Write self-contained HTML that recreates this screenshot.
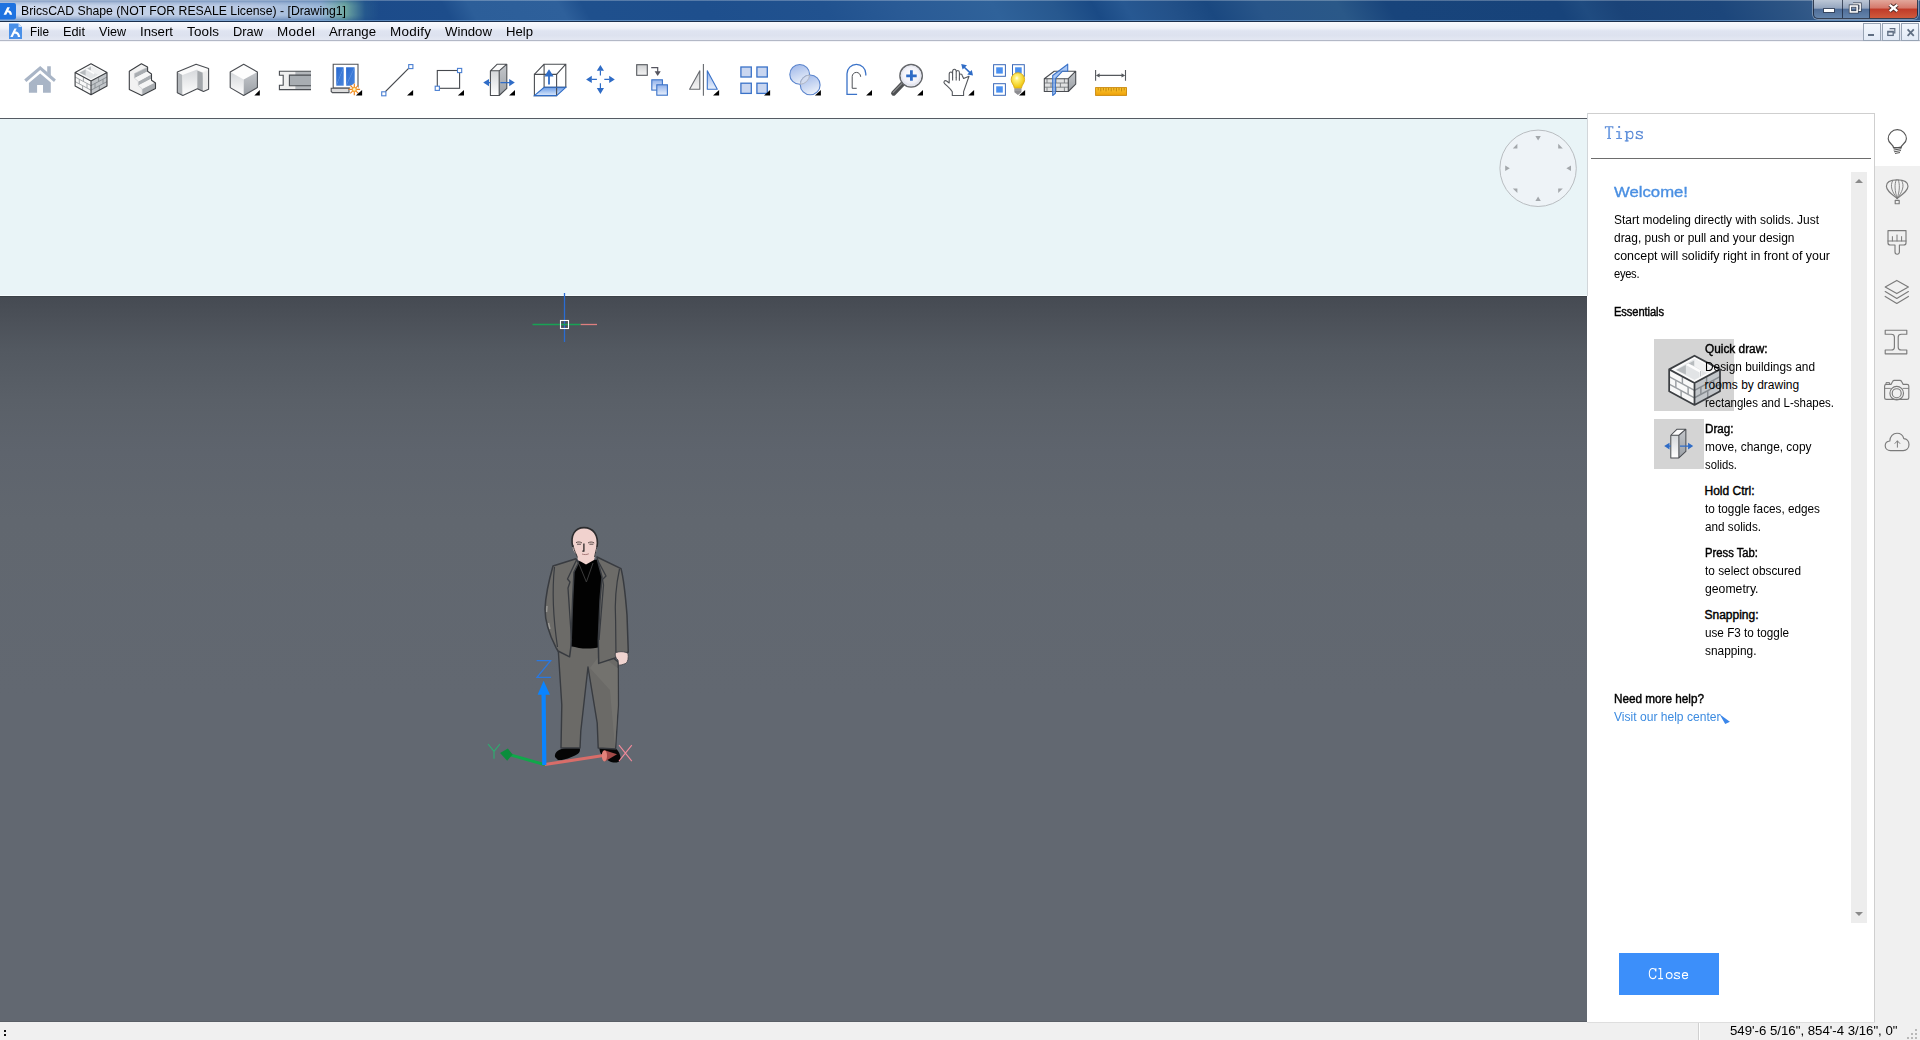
<!DOCTYPE html>
<html><head><meta charset="utf-8"><title>BricsCAD Shape</title>
<style>
html,body{margin:0;padding:0;}
body{width:1920px;height:1040px;position:relative;overflow:hidden;background:#fff;font-family:"Liberation Sans",sans-serif;}
.a{position:absolute;}
.t{position:absolute;white-space:nowrap;line-height:1;font-family:"Liberation Sans",sans-serif;}
svg{position:absolute;overflow:visible;}
</style></head>
<body>
<!-- title bar -->
<div class="a" id="titlebar" style="left:0;top:0;width:1920px;height:21px;overflow:hidden;background:#1c4b8a;"><div style="position:absolute;left:-20px;top:0;width:1980px;height:21px;transform:skewX(30deg);transform-origin:0 0;background:linear-gradient(90deg,#1c4b8a 20px,#1c4b8a 382px,#1d4d8b 460px,#2c5e99 486px,#2e609b 576px,#1f508d 600px,#1e4f8d 720px,#21528f 840px,#2a5b96 920px,#2f629a 1010px,#27588f 1070px,#1a4a85 1110px,#275892 1142px,#235189 1185px,#1a4880 1225px,#285589 1275px,#2a5888 1355px,#18447b 1405px,#17437a 1575px,#1f4b80 1600px,#1a4378 1635px,#1c467b 1735px,#2c5484 1805px,#355b8a 1833px,#355b8a 1980px);"></div></div>
<div class="a" style="left:0;top:0;width:380px;height:21px;background:linear-gradient(90deg,rgba(208,219,238,1) 0px,rgba(200,212,234,0.98) 120px,rgba(190,205,230,0.97) 250px,rgba(170,195,225,0.9) 320px,rgba(140,200,170,0.75) 345px,rgba(60,120,150,0.3) 365px,rgba(29,79,143,0) 380px);-webkit-mask-image:linear-gradient(180deg,rgba(0,0,0,0.5) 0px,rgba(0,0,0,0.85) 3px,#000 6px,#000 15px,rgba(0,0,0,0.8) 18px,rgba(0,0,0,0.5) 21px);mask-image:linear-gradient(180deg,rgba(0,0,0,0.5) 0px,rgba(0,0,0,0.85) 3px,#000 6px,#000 15px,rgba(0,0,0,0.8) 18px,rgba(0,0,0,0.5) 21px);"></div>
<div class="a" style="left:0;top:0;width:1920px;height:1px;background:rgba(255,255,255,0.25);"></div>
<div class="a" style="left:0;top:20px;width:1920px;height:1px;background:rgba(140,185,230,0.55);"></div>
<div class="a" style="left:0;top:21px;width:1920px;height:1px;background:#1a2f4d;"></div>
<!-- app icon -->
<svg style="left:0;top:3px" width="16" height="17" viewBox="0 0 16 17"><rect x="-2" y="0" width="18" height="16.5" rx="2" fill="#1e72e0"/><path d="M7.2 4.2 L9.9 4.2 L6.25 11.7 L3.6 11.7 Z M7.6 7.3 C10 7.1 11.7 8.4 12.1 11.7 L9.7 11.7 C9.5 9.9 8.6 9.3 6.7 9.3 Z" fill="#fff"/></svg>
<!-- window buttons -->
<div class="a" style="left:1813px;top:0;width:105px;height:19px;border:1px solid rgba(20,30,50,0.8);border-top:none;border-radius:0 0 5px 5px;box-sizing:border-box;background:linear-gradient(180deg,#bcc7d6 0%,#94a5be 46%,#4f6d97 50%,#6484ac 100%);box-shadow:0 0 0 1px rgba(255,255,255,0.35);"></div>
<div class="a" style="left:1870px;top:0;width:47px;height:18px;border-radius:0 0 4px 0;background:linear-gradient(180deg,#e2a79b 0%,#d5786a 45%,#c03a28 50%,#cf5a3c 100%);"></div>
<div class="a" style="left:1842px;top:0;width:1px;height:18px;background:rgba(20,30,50,0.7);"></div>
<div class="a" style="left:1869px;top:0;width:1px;height:18px;background:rgba(20,30,50,0.7);"></div>
<div class="a" style="left:1824px;top:9px;width:10px;height:3px;background:#fff;box-shadow:0 0 0 1px rgba(40,50,70,0.7);"></div>
<svg style="left:1849px;top:2px" width="12.5" height="12" viewBox="0 0 14 12"><path d="M4.5 1.5h8v7h-2.5" fill="none" stroke="#333c4c" stroke-width="3.2"/><path d="M4.5 1.5h8v7h-2.5" fill="none" stroke="#fff" stroke-width="1.6"/><rect x="1.5" y="3.8" width="7.6" height="6.6" fill="none" stroke="#333c4c" stroke-width="3.4"/><rect x="1.5" y="3.8" width="7.6" height="6.6" fill="none" stroke="#fff" stroke-width="1.8"/></svg>
<svg style="left:1887px;top:3px" width="13" height="10" viewBox="0 0 13 10"><path d="M2.7 1.9 L10.3 8.1 M10.3 1.9 L2.7 8.1" stroke="#4a2a26" stroke-width="4"/><path d="M2.7 1.9 L10.3 8.1 M10.3 1.9 L2.7 8.1" stroke="#fff" stroke-width="2.4"/></svg>
<!-- menu bar -->
<div class="a" style="left:0;top:22px;width:1920px;height:18px;background:linear-gradient(180deg,#f9fafd 0%,#eef1f8 35%,#dfe4f1 50%,#dde2ef 75%,#e4e8f3 100%);"></div>
<div class="a" style="left:0;top:40px;width:1920px;height:1px;background:#b3b8c6;"></div>
<div class="a" style="left:0;top:41px;width:1920px;height:1px;background:#f3f4f8;"></div>
<svg style="left:9px;top:23px" width="14" height="16" viewBox="0 0 14 16"><path d="M0 0.5h9.5L13 4v12H0z" fill="#4a90e8"/><path d="M9.5 0.5V4H13z" fill="#cfe2fb"/><path d="M5.4 5.4 L7.7 5.4 L3.7 14 L1.3 14 Z M5.9 8.5 C8.4 8.3 10.5 9.6 11.2 14 L8.9 14 C8.6 11.5 7.6 10.6 4.9 10.6 Z" fill="#fff"/></svg>
<!-- mdi child buttons -->
<div class="a" style="left:1863px;top:23px;width:18px;height:18px;box-sizing:border-box;border:1px solid #98a4b4;background:linear-gradient(180deg,#f2f6fc,#e2eaf6);"></div>
<div class="a" style="left:1882px;top:23px;width:18px;height:18px;box-sizing:border-box;border:1px solid #98a4b4;background:linear-gradient(180deg,#f2f6fc,#e2eaf6);"></div>
<div class="a" style="left:1901px;top:23px;width:18px;height:18px;box-sizing:border-box;border:1px solid #98a4b4;background:linear-gradient(180deg,#f2f6fc,#e2eaf6);"></div>
<div class="a" style="left:1868px;top:34px;width:6px;height:2px;background:#5f6e82;"></div>
<svg style="left:1886px;top:27px" width="11" height="10" viewBox="0 0 11 10"><path d="M3.6 1.6h5.2v4.4h-1.6" fill="none" stroke="#5f6e82" stroke-width="1.2"/><rect x="1.8" y="4.4" width="5.4" height="4" fill="none" stroke="#5f6e82" stroke-width="1.3"/><path d="M1.8 4.8h5.4" stroke="#5f6e82" stroke-width="1.6"/></svg>
<svg style="left:1906px;top:28px" width="9" height="9" viewBox="0 0 9 9"><path d="M1.6 1.4 L7.8 7.8 M7.8 1.4 L1.6 7.8" stroke="#5f6e82" stroke-width="1.8"/></svg>
<!-- status bar -->
<div class="a" style="left:0;top:1022px;width:1920px;height:18px;background:#f0f0f0;"></div>
<div class="a" style="left:0;top:1021px;width:1587px;height:1px;background:#595e66;"></div>
<div class="a" style="left:1698px;top:1023px;width:1px;height:17px;background:#d0d0d0;"></div>
<div class="a" style="left:1699px;top:1023px;width:1px;height:17px;background:#fff;"></div>
<svg style="left:1906px;top:1028px" width="12" height="12" viewBox="0 0 12 12"><g fill="#b8b8b8"><rect x="9" y="1" width="2" height="2"/><rect x="5" y="5" width="2" height="2"/><rect x="9" y="5" width="2" height="2"/><rect x="1" y="9" width="2" height="2"/><rect x="5" y="9" width="2" height="2"/><rect x="9" y="9" width="2" height="2"/></g></svg>
<div class="a" style="left:4px;top:1029.5px;width:2px;height:2px;background:#111;"></div>
<div class="a" style="left:4px;top:1034px;width:2px;height:2px;background:#111;"></div>
<!-- toolbar -->
<div class="a" style="left:0;top:42px;width:1920px;height:76px;background:#fff;"></div>
<div class="a" style="left:0;top:118px;width:1587px;height:1px;background:#555b63;"></div>
<svg width="0" height="0" style="left:0;top:0"><defs>
<linearGradient id="gBlueV" x1="0" y1="0" x2="0" y2="1"><stop offset="0" stop-color="#8fb0ea"/><stop offset="1" stop-color="#eaf1fc"/></linearGradient>
<linearGradient id="gGrayV" x1="0" y1="0" x2="0" y2="1"><stop offset="0" stop-color="#cfd1d3"/><stop offset="1" stop-color="#f4f4f4"/></linearGradient>
<linearGradient id="gSlabF" x1="0" y1="0" x2="0" y2="1"><stop offset="0" stop-color="#d4d7da"/><stop offset="1" stop-color="#ffffff"/></linearGradient>
<linearGradient id="gSlabR" x1="0" y1="0" x2="0" y2="1"><stop offset="0" stop-color="#c4c7cb"/><stop offset="1" stop-color="#9a9fa5"/></linearGradient>
<linearGradient id="gRuler" x1="0" y1="0" x2="0" y2="1"><stop offset="0" stop-color="#fbc832"/><stop offset="1" stop-color="#eea008"/></linearGradient>
<radialGradient id="gBulb" cx="0.42" cy="0.35" r="0.6"><stop offset="0" stop-color="#ffffff"/><stop offset="0.25" stop-color="#fff27a"/><stop offset="1" stop-color="#f0c810"/></radialGradient>
<radialGradient id="gLens" cx="0.5" cy="0.45" r="0.55"><stop offset="0" stop-color="#ffffff"/><stop offset="0.7" stop-color="#f0f0f8"/><stop offset="1" stop-color="#c8cce0"/></radialGradient>
<linearGradient id="gCirc" x1="0" y1="0" x2="0.4" y2="1"><stop offset="0" stop-color="#9ab4e8"/><stop offset="1" stop-color="#e8eef9"/></linearGradient>
<linearGradient id="gFloor" x1="0" y1="0" x2="0" y2="1"><stop offset="0" stop-color="#6a9ce6"/><stop offset="1" stop-color="#dce9fb"/></linearGradient>
<linearGradient id="gPane" x1="0" y1="0" x2="1" y2="1"><stop offset="0" stop-color="#2768cf"/><stop offset="0.45" stop-color="#3a78d6"/><stop offset="0.5" stop-color="#5a90e0"/><stop offset="0.55" stop-color="#3a78d6"/><stop offset="1" stop-color="#4a86dc"/></linearGradient>
<path id="tri" d="M26 31.5h6v-5.6z" fill="#000"/>
<g id="bricks">
 <path d="M16 -0.2 L32 8.4 L16 17 L0.1 8.4z" fill="#fbfbfb"/>
 <path d="M16 1.7 L27.8 8.6 L16 15 L4.2 8.6z" fill="#e2e4e6"/>
 <path d="M4.5 8.8 L10.6 5.6 L10.6 11.6z" fill="#b7bbbe"/>
 <path d="M12.1 4.9 L15.9 2.8 L15.9 6.2z" fill="#b7bbbe"/>
 <path d="M16 1.7 L27.8 8.6 L23.6 10.9 L16 6.4z" fill="#f0f1f2"/>
 <path d="M10.6 5.6 L12.2 4.7 L20.4 9.3 L20.4 12.6 L19.2 13.2 L19.2 10.4z" fill="#fdfdfd"/>
 <path d="M19.8 9.4 V12.8" stroke="#c3c6c9" stroke-width="0.7"/>
 <path d="M0.1 8.4 L16 17 L16 30.7 L0.1 22.1z" fill="#f8f8f8"/>
 <path d="M16 17 L32 8.4 L32 22.1 L16 30.7z" fill="#c2c6ca"/>
 <g stroke="#9a9ea2" stroke-width="0.9" fill="none">
  <path d="M0.1 13 L16 21.6 M0.1 17.6 L16 26.2"/>
  <path d="M8.4 12.9 v4.6 M4.3 15.3 v4.6 M12 19.4 v4.6 M7.6 21.7 v4.5"/>
 </g>
 <g stroke="#878c91" stroke-width="0.9" fill="none">
  <path d="M16 21.6 L32 13 M16 26.2 L32 17.6"/>
  <path d="M23.6 12.9 v4.6 M20 19.4 v4.6 M28 15.2 v4.6 M24.3 21.7 v4.5"/>
 </g>
 <path d="M16 -0.2 L32 8.4 L32 22.1 L16 30.7 L0.1 22.1 L0.1 8.4z M0.1 8.4 L16 17 L32 8.4 M16 17 V30.7" fill="none" stroke="#3c3f43" stroke-width="1.1" stroke-linejoin="round"/>
</g>
<g id="dragicon">
 <path d="M7.4 6.8 L14.25 0.2 L23.8 0.2 L16.2 6.8z" fill="#fbfbfb"/>
 <path d="M7.4 6.8 H16.2 V31.5 H7.4z" fill="url(#gSlabF)"/>
 <path d="M16.2 6.8 L23.8 0.2 V24.4 L16.2 31.5z" fill="url(#gSlabR)"/>
 <path d="M7.4 6.8 L14.25 0.2 H23.8 V24.4 L16.2 31.5 H7.4z M7.4 6.8 H16.2 L23.8 0.2 M16.2 6.8 V31.5" fill="none" stroke="#4a4d52" stroke-width="1.1" stroke-linejoin="round"/>
 <path d="M0.2 18.6 L6 15 V22.2z M31.8 18.6 L26.2 15 V22.2z" fill="#2f6cc6"/>
 <path d="M5.5 18.6 H7.4 M17.4 18.6 H27" stroke="#2f6cc6" stroke-width="1.2"/>
</g>
</defs></svg>
<!-- 0 home -->
<svg style="left:24px;top:64px" width="32" height="32" viewBox="0 0 32 32"><g fill="#a9b5c6">
<path d="M16.2 2.0 L31.9 15.4 L30 17.9 L16.2 6.1 L2.4 17.9 L0.2 15.4z"/>
<path d="M23.2 2.2 H26.8 V12 L23.2 8.6z"/>
<path d="M16.2 9.5 L26.8 18.5 V28.7 H19 V20.9 H13.1 V28.7 H4.9 V18.9z"/></g></svg>
<!-- 1 bricks -->
<svg style="left:75px;top:64px" width="32" height="32" viewBox="0 0 32 32"><use href="#bricks"/></svg>
<!-- 2 stairs -->
<svg style="left:126px;top:64px" width="32" height="32" viewBox="0 0 32 32">
<path d="M15.4 -0.2 L21.6 2.9 V7.2 L25.5 10 V16.2 L29.5 19 V24.4 L15.8 31.5 L3.3 25.6 V7.2z" fill="#f2f2f2"/>
<path d="M8.4 9.6 L21.4 3.2 V7.4 L8.4 14.2z M12.3 17.6 L25.3 10.6 V14.8 L12.3 21.6z M16.2 25.0 L29.3 18.6 V24.2 L16.2 31z" fill="#a9adb1"/>
<path d="M8.4 14.2 L21.4 7.4 L25.3 10.2 L12.3 17.4z M12.3 21.6 L25.3 14.8 L29.3 17.8 L16.2 24.8z" fill="#f6f6f6"/>
<path d="M8.4 9.6 L21.4 3.2 M8.4 9.6 V14.2 L12.3 17.4 V21.6 L16.2 24.8 V31" fill="none" stroke="#c8cacc" stroke-width="0.6"/>
<path d="M15.4 -0.2 L21.6 2.9 V7.2 L25.5 10 V16.2 L29.5 19 V24.4 L15.8 31.5 L3.3 25.6 V7.2z" fill="none" stroke="#3c3f43" stroke-width="1.1" stroke-linejoin="round"/>
</svg>
<!-- 3 L wall -->
<svg style="left:177px;top:64px" width="32" height="32" viewBox="0 0 32 32">
<path d="M19.1 0.2 L31.6 4.5 V25.2 L26.5 27.5 L20.3 24.8 L5.8 31.5 L0.3 28.7 V8z" fill="#f3f3f3"/>
<path d="M0.3 8 L5.4 10.4 V31.3 L0.3 28.7z" fill="#b4b8bc"/>
<path d="M5.4 10.4 L19.1 4.6 L20.3 5.4 V24.8 L5.8 31.5z" fill="url(#gSlabF)"/>
<path d="M20.3 6.5 L25.8 8.8 V27.2 L20.3 24.8z" fill="#a3a7ab"/>
<path d="M25.8 8.8 L31.6 6.4 V25.2 L26.5 27.5z" fill="#ececec"/>
<path d="M0.3 8 L19.1 0.2 L31.6 4.5 L25.8 8.0 L20.3 5.4 L5.4 11z" fill="#fbfbfb"/>
<path d="M19.1 0.2 L31.6 4.5 V25.2 L26.5 27.5 L20.3 24.8 L5.8 31.5 L0.3 28.7 V8z" fill="none" stroke="#4a4d52" stroke-width="1.1" stroke-linejoin="round"/>
</svg>
<!-- 4 cube -->
<svg style="left:228px;top:64px" width="32" height="32" viewBox="0 0 32 32">
<path d="M15.7 0.2 L29.4 8 L15.7 15.4 L2.2 8z" fill="#fdfdfd"/>
<path d="M2.2 8 L15.7 15.4 V31.5 L2.2 23.6z" fill="url(#gSlabF)"/>
<path d="M15.7 15.4 L29.4 8 V23.6 L15.7 31.5z" fill="url(#gSlabR)"/>
<path d="M15.7 0.2 L29.4 8 V23.6 L15.7 31.5 L2.2 23.6 V8z" fill="none" stroke="#4a4d52" stroke-width="1.1" stroke-linejoin="round"/>
<path d="M26.3 31.5h5.5v-5.5z" fill="#000"/></svg>
<!-- 5 wall connect -->
<svg style="left:279px;top:64px" width="32" height="32" viewBox="0 0 32 32">
<path d="M0.4 7.3 H16.3 V25.6 H0.4 V21.3 H4.2 V11.2 H0.4z" fill="#efefef"/>
<path d="M16.3 7.3 H32 V25.6 H16.3z" fill="#b3b7bb"/>
<path d="M10.4 11.1 H32 V21.7 H10.4z" fill="#a8adb2"/>
<path d="M32 7.3 H0.4 V11.2 H4.2 V21.3 H0.4 V25.6 H32" fill="none" stroke="#4a4d52" stroke-width="1.1"/>
<path d="M32 11.1 H10.4 V21.7 H32" fill="none" stroke="#4a4d52" stroke-width="1.1"/>
</svg>
<!-- 6 window -->
<svg style="left:330px;top:64px" width="32" height="32" viewBox="0 0 32 32">
<path d="M3.2 0.3 H28 V24 H3.2z" fill="#fff" stroke="#505358" stroke-width="1.1"/>
<path d="M6.2 3.2 H13.7 V21.7 H6.2z" fill="url(#gPane)"/>
<path d="M16.1 3.2 H24.7 V19 L21 21.7 H16.1z" fill="url(#gPane)"/>
<path d="M1.2 24.2 H19 V28.6 H2.4 L1.2 27.4z" fill="#dcdcdc" stroke="#505358" stroke-width="1.1"/>
<circle cx="24.3" cy="25.4" r="4.6" fill="#fff"/>
<g stroke="#ee8422" stroke-width="1.2"><path d="M24.3 19.6 V31.2 M18.5 25.4 H30.1 M20.3 21.4 L28.3 29.4 M28.3 21.4 L20.3 29.4"/></g>
<circle cx="24.3" cy="25.4" r="2.6" fill="#f8a838"/><circle cx="24.3" cy="25.4" r="1.3" fill="#fff3c0"/>
<path d="M25.9 31.5h6.2v-5.5z" fill="#000"/></svg>
<!-- 7 line -->
<svg style="left:381px;top:64px" width="32" height="32" viewBox="0 0 32 32">
<path d="M4.4 27.6 L27.6 4.4" stroke="#45484d" stroke-width="1.2"/>
<rect x="0.7" y="27.8" width="4.2" height="4" fill="#fff" stroke="#4a7fd2" stroke-width="1.1"/>
<rect x="27.7" y="0.6" width="4.2" height="4" fill="#fff" stroke="#4a7fd2" stroke-width="1.1"/>
<path d="M26 31.5h6.1v-5.5z" fill="#000"/></svg>
<!-- 8 rect -->
<svg style="left:432px;top:64px" width="32" height="32" viewBox="0 0 32 32">
<rect x="5.3" y="6.5" width="22.3" height="17.8" fill="none" stroke="#45484d" stroke-width="1.1"/>
<rect x="25.5" y="4.4" width="4.2" height="4.2" fill="#fff" stroke="#4a7fd2" stroke-width="1.1"/>
<rect x="3.2" y="22.2" width="4.2" height="4.2" fill="#fff" stroke="#4a7fd2" stroke-width="1.1"/>
<path d="M25.8 31.5h6.2v-5.5z" fill="#000"/></svg>
<!-- 9 drag -->
<svg style="left:483px;top:64px" width="32" height="32" viewBox="0 0 32 32"><use href="#dragicon"/><path d="M26.1 31.5h5.9v-5.5z" fill="#000"/></svg>
<!-- 10 pushpull -->
<svg style="left:534px;top:64px" width="32" height="32" viewBox="0 0 32 32">
<path d="M0.4 31.6 L10.1 23.3 H31.8 L22.6 31.6z" fill="url(#gFloor)"/>
<path d="M10.1 0.2 H31.8 V23.3 H10.1z M0.4 10.4 L10.1 0.2 M22.6 10.4 L31.8 0.2" fill="none" stroke="#4a4d52" stroke-width="1.1"/>
<path d="M0.4 10.4 H22.6 V31.6 H0.4z" fill="none" stroke="#4a4d52" stroke-width="1.1"/>
<path d="M0.4 31.6 L10.1 23.3 H31.8 L22.6 31.6z" fill="none" stroke="#2f6cc6" stroke-width="1.1"/>
<path d="M15 5.3 L19.6 12.4 H10.4z" fill="#2f6cc6"/><path d="M15 12 V20.5" stroke="#2f6cc6" stroke-width="1.8"/>
</svg>
<!-- 11 move -->
<svg style="left:585px;top:64px" width="32" height="32" viewBox="0 0 32 32"><g fill="#2f6cc6" stroke="none">
<path d="M15.4 1 L19 6.8 H11.8z M15.4 30 L19 24 H11.8z M1.1 15.4 L6.8 11.8 V19z M29.8 15.4 L24.2 11.8 V19z"/></g>
<path d="M15.4 6.5 V11.5 M15.4 19.3 V24.3 M6.5 15.4 H11.9 M19.3 15.4 H24.5" stroke="#2f6cc6" stroke-width="1.2"/></svg>
<!-- 12 copy -->
<svg style="left:636px;top:64px" width="32" height="32" viewBox="0 0 32 32">
<rect x="0.7" y="0.7" width="10.6" height="10.6" fill="url(#gGrayV)" stroke="#55585d" stroke-width="1.1"/>
<path d="M15.2 3.6 H21.7 V8" fill="none" stroke="#55555f" stroke-width="1.2"/><path d="M18.6 7.2 H24.7 L21.7 11.9z" fill="#55555f"/>
<rect x="15.8" y="15.8" width="10.6" height="10.3" fill="url(#gBlueV)" stroke="#3a72c8" stroke-width="1.1"/>
<rect x="20.8" y="20.8" width="10.6" height="10.4" fill="url(#gBlueV)" stroke="#3a72c8" stroke-width="1.1"/>
</svg>
<!-- 13 mirror -->
<svg style="left:687px;top:64px" width="32" height="32" viewBox="0 0 32 32">
<path d="M2.6 25.3 H12.8 V6.8z" fill="url(#gGrayV)" stroke="#66696e" stroke-width="1.1" stroke-linejoin="round"/>
<path d="M16.4 0 V31.8" stroke="#66696e" stroke-width="1.1"/>
<path d="M20.3 6.8 V25.3 H30.3z" fill="url(#gBlueV)" stroke="#3a72c8" stroke-width="1.1" stroke-linejoin="round"/>
<path d="M26 31.5h6.1v-5.5z" fill="#000"/></svg>
<!-- 14 array -->
<svg style="left:738px;top:64px" width="32" height="32" viewBox="0 0 32 32"><g fill="#c9d6f0" stroke="#3a72c8" stroke-width="1.3">
<rect x="2.9" y="3" width="10.4" height="10"/><rect x="18.9" y="3" width="10.4" height="10"/><rect x="2.9" y="19.2" width="10.4" height="10.2"/><rect x="18.9" y="19.2" width="10.4" height="10.2"/></g>
<path d="M26 31.5h6.1v-5.5z" fill="#000"/></svg>
<!-- 15 union -->
<svg style="left:789px;top:64px" width="32" height="32" viewBox="0 0 32 32">
<circle cx="10.7" cy="10.4" r="9.9" fill="url(#gCirc)" stroke="#5a84cc" stroke-width="1.1"/>
<circle cx="21.2" cy="20.9" r="9.9" fill="url(#gCirc)" stroke="#5a84cc" stroke-width="1.1"/>
<path d="M11.3 20.3 A9.9 9.9 0 0 1 20.6 11 A9.9 9.9 0 0 1 11.3 20.3z" fill="#d2dcf0" stroke="#b0b6c4" stroke-width="1"/>
<path d="M25.9 31.5h6v-5.5z" fill="#000"/></svg>
<!-- 16 fillet -->
<svg style="left:840px;top:64px" width="32" height="32" viewBox="0 0 32 32">
<path d="M17.1 30.4 H7 V9.8 A9.4 9.4 0 0 1 25.8 9.8 V11.6" fill="none" stroke="#3a72c8" stroke-width="1.3"/>
<path d="M16.7 24.3 H12.2 V12.6 A4.2 4.2 0 0 1 20.6 12.6 V13" fill="none" stroke="#505358" stroke-width="1"/>
<path d="M26.1 31.5h5.9v-5.5z" fill="#000"/></svg>
<!-- 17 zoom -->
<svg style="left:891px;top:64px" width="32" height="32" viewBox="0 0 32 32">
<path d="M11.7 19.7 L2.6 29.2" stroke="#4e5052" stroke-width="5" stroke-linecap="round"/>
<path d="M10.8 19.6 L2.2 28.4" stroke="#8a8c8e" stroke-width="1.2" stroke-linecap="round"/>
<circle cx="20.1" cy="11.8" r="11.2" fill="url(#gLens)" stroke="#66686c" stroke-width="1.5"/>
<circle cx="20.1" cy="11.8" r="9.8" fill="none" stroke="#e4e6ee" stroke-width="1.2"/>
<path d="M15.2 11.8 H25.7 M20.4 6.3 V16.8" stroke="#2f6cc6" stroke-width="2.8"/>
<path d="M26.1 31.5h5.9v-5.5z" fill="#000"/></svg>
<!-- 18 pan -->
<svg style="left:942px;top:64px" width="32" height="32" viewBox="0 0 32 32">
<path d="M10.3 31.5 V27.8 C8.6 24.6 5.4 22.4 2.6 19.6 C1 18 2.6 15.8 4.6 17 L7.2 19 V10.2 C7.2 7.2 10.6 7.2 10.6 10.2 V13 V7.6 C10.6 4.4 14.2 4.4 14.2 7.6 V13 V8.6 C14.2 5.8 17.4 5.8 17.4 8.6 V14 V11.4 C17.6 9.4 20 9.6 20.2 11.4 L21.6 14.4 L27 12.2 L21.6 27.6 V31.5z" fill="#fff" stroke="#55585d" stroke-width="1.1" stroke-linejoin="round"/>
<path d="M10.6 13 V16.4 M14.2 13 V16.4 M17.4 14 V16.8" stroke="#55585d" stroke-width="1.1"/>
<path d="M21 2 L29 9.6" stroke="#2f6cc6" stroke-width="1.6"/>
<path d="M19.2 0 L25 1.2 L20.6 5.6z M31 11.6 L25.2 10.6 L29.8 6z" fill="#2f6cc6"/>
<path d="M26.2 31.5h5.9v-5.5z" fill="#000"/></svg>
<!-- 19 select bulb -->
<svg style="left:993px;top:64px" width="32" height="32" viewBox="0 0 32 32">
<g fill="#fff" stroke="#3a68b8" stroke-width="1"><rect x="0.6" y="0.7" width="11.8" height="11.6"/><rect x="0.6" y="19.7" width="11.8" height="11.6"/><rect x="19.5" y="0.7" width="11.8" height="11.6"/></g>
<g fill="#4a90f0"><rect x="3.2" y="3.3" width="6.6" height="6.3"/><rect x="3.2" y="22.3" width="6.6" height="6.3"/><rect x="22.1" y="3.3" width="6.6" height="6.3"/></g>
<path d="M21.4 24.2 C21 20.6 18.2 19.4 18.2 15.4 A6.7 6.7 0 0 1 31.6 15.4 C31.6 19.4 28.8 20.6 28.4 24.2z" fill="url(#gBulb)" stroke="#d8a818" stroke-width="0.9"/>
<path d="M21.4 24.4 H28.4 V28.2 L24.9 31 L21.4 28.2z" fill="#8c8c90"/>
<path d="M21.4 26 H28.4" stroke="#b4b4b8" stroke-width="0.8"/>
<path d="M26 31.5h6.1v-5.5z" fill="#000"/></svg>
<!-- 20 section -->
<svg style="left:1044px;top:64px" width="32" height="32" viewBox="0 0 32 32">
<path d="M0.3 14.7 L10.2 7.2 H31.7 L24.3 14.7z" fill="#fdfdfd"/>
<path d="M0.3 14.7 H24.3 V27.5 H0.3z" fill="#e0e1e2"/>
<path d="M24.3 14.7 L31.7 7.2 V20.1 L24.3 27.5z" fill="url(#gSlabR)"/>
<g stroke="#777a7e" stroke-width="0.9" fill="none"><path d="M0.3 19 H24.3 M0.3 23.2 H24.3 M3 14.7 V19 M12 14.7 V19 M20.4 14.7 V19 M7 19 V23.2 M16.4 19 V23.2 M3 23.2 V27.5 M12 23.2 V27.5 M20.4 23.2 V27.5"/></g>
<path d="M0.3 14.7 L10.2 7.2 H31.7 V20.1 L24.3 27.5 H0.3z M0.3 14.7 H24.3 L31.7 7.2 M24.3 14.7 V27.5" fill="none" stroke="#4a4d52" stroke-width="1.1" stroke-linejoin="round"/>
<path d="M8.7 11.5 L23.7 0.2 V7.2 H18.5 L11.4 14.7 V29.3 L8.7 31.5z" fill="rgba(140,180,240,0.75)" stroke="#3a72c8" stroke-width="1.1" stroke-linejoin="round"/>
</svg>
<!-- 21 measure -->
<svg style="left:1095px;top:64px" width="32" height="32" viewBox="0 0 32 32">
<path d="M0.6 6 V16.8 M30.5 6 V16.8 M3 11.4 H28" stroke="#55585d" stroke-width="1.1" fill="none"/>
<path d="M0.9 11.4 L4.6 9.2 V13.6z M30.2 11.4 L26.5 9.2 V13.6z" fill="#55585d"/>
<rect x="0.6" y="23.6" width="30.9" height="7.8" fill="url(#gRuler)" stroke="#c8860a" stroke-width="0.9"/>
<path d="M3.2 24 V26.4 M5.8 24 V27.4 M8.4 24 V26.4 M11 24 V27.4 M13.6 24 V26.4 M16.2 24 V27.4 M18.8 24 V26.4 M21.4 24 V27.4 M24 24 V26.4 M26.6 24 V27.4 M29.2 24 V26.4" stroke="#b87808" stroke-width="0.8"/>
</svg>
<!-- viewport -->
<div class="a" style="left:0;top:119px;width:1587px;height:177px;background:#e9f4f7;"></div>
<div class="a" style="left:0;top:296px;width:1587px;height:725px;background:linear-gradient(180deg,#454a52 0px,#4c5159 25px,#535961 55px,#5a6068 105px,#5e646d 155px,#61676f 225px,#626871 400px,#626871 725px);"></div>
<div class="a" style="left:0;top:295px;width:1587px;height:1px;background:#f6fcfe;"></div>
<div class="a" style="left:0;top:296px;width:1587px;height:1px;background:#3b4147;"></div>
<svg style="left:0;top:0" width="1587" height="1040" viewBox="0 0 1587 1040">
<!-- compass -->
<circle cx="1538.1" cy="168.3" r="38.2" fill="#eef3f7" stroke="#b9bdc1" stroke-width="1"/>
<g fill="#a3a7ab">
<path d="M1535.4 136 h5.4 l-2.7 4.6z"/><path d="M1535.4 201 h5.4 l-2.7 -4.6z"/>
<path d="M1505.2 165.6 v5.4 l4.6 -2.7z"/><path d="M1571 165.6 v5.4 l-4.6 -2.7z"/>
<path d="M1517.4 143.8 v4.6 h-4.6z"/><path d="M1558.2 143.8 v4.6 h4.6z"/>
<path d="M1517.4 193 v-4.6 h-4.6z"/><path d="M1558.2 193 v-4.6 h4.6z"/>
</g>
<!-- crosshair -->
<path d="M564.5 293 V342" stroke="#2a6cd2" stroke-width="1.3"/>
<path d="M532.5 324.5 H580.6" stroke="#18a255" stroke-width="1.3"/>
<path d="M580.6 324.5 H597" stroke="#de7f7f" stroke-width="1.3"/>
<rect x="560.5" y="320.5" width="8" height="8" fill="none" stroke="#fff" stroke-width="1.1"/>
<!-- man -->
<g stroke-linejoin="round">
<!-- shoes -->
<path d="M555 757 C554 752 560 748.5 566 748 L579.5 747.5 C581 751 579 754 575 755.5 C570 757.5 565 760.5 558 760z" fill="#050505"/>
<path d="M599.5 747.5 L615.5 748.5 C619 751 621 756 620.5 760 C618 763.5 613 763 609 761 C604 758 599 754 599.5 747.5z" fill="#050505"/>
<!-- trousers -->
<path d="M558 646 L599 646 L618.2 662 L618.4 705 L615.6 749 L598.2 748 L597.2 723 L588 667 L580.8 731 L580 748 L561 748 L561.8 705z" fill="#6b6a67" stroke="#383b40" stroke-width="1.4"/>
<path d="M590 668 L600 655 L617.6 668 L617.8 705 L615 748 L610 690z" fill="#757471" opacity="0.8"/>
<!-- shirt -->
<path d="M572 562 L603 559 L600 647 C590 649.5 580 649 571 646z" fill="#020202"/>
<!-- jacket left (viewer left) -->
<path d="M576 558.8 L553 566 C549 580 545.5 598 545 609 C545 622 549 634 556 647.6 L558 651 L569.6 656.8 L571 646 L572.6 600 L574 572 L578.5 563z" fill="#6c6b68" stroke="#383b40" stroke-width="1.5"/>
<!-- jacket right -->
<path d="M597 557 L621 568.6 C623.5 578 625.5 596 627 615 L628.3 652 L615 658 L598.7 663.4 L598.3 640 L600 600 L602 577 L598 562z" fill="#6c6b68" stroke="#383b40" stroke-width="1.5"/>
<!-- lapels and sleeve lines -->
<path d="M576.5 560 L567.5 579 L570 582 L568 588 L571.5 640" fill="none" stroke="#383b40" stroke-width="1.3"/>
<path d="M597 559 L606 576 L602.5 579.5 L603.5 585 L599 640" fill="none" stroke="#383b40" stroke-width="1.3"/>
<path d="M554.5 567 C552 590 553.5 620 557.5 647" fill="none" stroke="#383b40" stroke-width="1.2"/>
<path d="M619.5 569 C616 585 614.5 600 615.6 620 L616 657" fill="none" stroke="#383b40" stroke-width="1.2"/>
<path d="M547 606 L546.6 612 M548.5 623 L550 629" stroke="#9c9b98" stroke-width="1.4"/>
<!-- collar v -->
<path d="M579 564 L586.4 582 L593 563" fill="none" stroke="#3a3a3a" stroke-width="1"/>
<!-- hand -->
<path d="M615.2 653 C619 651 625 651.4 628 653.4 C628.6 658 628 661.5 626 663.4 C623 664.4 620 665.6 618.6 665 L618 660 C616 658.6 615 656 615.2 653z" fill="#f0d4d0" stroke="#3b3e43" stroke-width="0.8"/>
<!-- head -->
<path d="M572.6 546 C570.5 536 574 528.5 583.8 527.8 C593 527.6 598.5 535 597 546 C597.6 550 595.5 552 595 556 L594 560 L586 564.4 L578 560 L576.8 555 C574 552 572.5 549.5 572.6 546z" fill="#f1d2ce"/>
<path d="M572.8 547 C570 535 575 527.6 584 527.6 C593 527.6 599 535 597 547" fill="none" stroke="#2c2c2e" stroke-width="1.6"/>
<path d="M573 545 C574.5 552 576.5 554 577.4 557.5 M597 546 C596 551 595.2 553 594.6 557" fill="none" stroke="#3a3a3c" stroke-width="1"/>
<path d="M576 542.6 C578 541.6 580.5 541.8 582 543 M588 543 C590 541.6 592.4 541.8 594.2 543" fill="none" stroke="#5a4a48" stroke-width="1"/>
<path d="M577 544.2 h4 M589.4 544.2 h4" stroke="#4a4040" stroke-width="0.9"/>
<path d="M583.9 543.6 V551.2 h-1.6" fill="none" stroke="#2a2626" stroke-width="1.3"/>
<path d="M582 554 C584 554.8 586.5 554.8 588.8 553.8" fill="none" stroke="#a07070" stroke-width="0.9"/>
</g>
<!-- UCS -->
<path d="M544.8 764.6 L507.9 754.2" stroke="#10a84a" stroke-width="3"/>
<path d="M500.1 752.9 L507.9 748.6 L512.6 754.4 L507.2 760.8z" fill="#0b8e3c"/>
<path d="M544.8 764.6 L603.5 755.6" stroke="#d86d69" stroke-width="3"/>
<path d="M604.6 750.2 L617 754.2 L604.8 761.4z" fill="#a34a48"/>
<ellipse cx="604.4" cy="755.8" rx="2.6" ry="5.6" fill="#e2827a"/>
<path d="M544.3 765 L543.6 694" stroke="#0a84ff" stroke-width="4.2"/>
<path d="M543.6 680.8 L550 694.8 H537.6z" fill="#0a84ff"/>
<path d="M536.6 660.6 H550.6 L537 677.4 H551" fill="none" stroke="#2a78e0" stroke-width="1.3"/>
<path d="M488 744 L494 751.4 L500 744 M494 751.4 V758.8" fill="none" stroke="#2ab070" stroke-width="1.1"/>
<path d="M619 745.2 L631.8 761.2 M631.8 745.2 L619 761.2" fill="none" stroke="#f08a9a" stroke-width="1.1"/>
</svg>
<!-- right strip -->
<div class="a" style="left:1875px;top:166px;width:45px;height:856px;background:#f0f0f0;"></div>
<!-- tips panel -->
<div class="a" style="left:1587px;top:113px;width:288px;height:909px;box-sizing:border-box;border:1px solid #cfcfcf;border-bottom:none;border-left:none;background:#fff;"></div>
<div class="a" style="left:1591px;top:158px;width:280px;height:1px;background:#6d6d6d;"></div>
<div class="a" style="left:1851px;top:172px;width:16px;height:751px;background:#ededed;"></div>
<svg style="left:1854px;top:177.5px" width="10" height="6" viewBox="0 0 10 6"><path d="M1 5 L5 1 L9 5z" fill="#8a8a8a"/></svg>
<svg style="left:1854px;top:911px" width="10" height="6" viewBox="0 0 10 6"><path d="M1 1 L5 5 L9 1z" fill="#8a8a8a"/></svg>
<div class="a" style="left:1654px;top:339px;width:80px;height:72px;background:#d4d4d4;"></div>
<div class="a" style="left:1654px;top:419px;width:50px;height:50px;background:#d4d4d4;"></div>
<svg style="left:1669px;top:356.2px" width="51" height="51" viewBox="0 0 32 32"><use href="#bricks"/></svg>
<svg style="left:1664px;top:428.6px" width="29.4" height="29.4" viewBox="0 0 32 32"><use href="#dragicon"/></svg>
<div class="a" style="left:1619px;top:953px;width:100px;height:42px;background:#3c8ffa;"></div>
<svg id="tipsT" style="left:1600px;top:120px" width="50" height="26" viewBox="1600 120 50 26" fill="none" stroke="#5a8ad6" stroke-width="1.15">
<path d="M1605.4 128.6 V126.7 H1612.8 V128.6 M1607.2 138.5 H1611"/><path d="M1609.1 126.7 V138.5" stroke-width="1.9" stroke="#79a4e6"/>
<path d="M1618.2 126.1 h1.9 v1.7 h-1.9z" fill="#4f7fd0" stroke="none"/><path d="M1616.2 131.6 H1618.8 M1616.2 138.5 H1622"/><path d="M1619.2 131.1 V138.5" stroke-width="1.9" stroke="#79a4e6"/>
<path d="M1624.8 131.6 H1626.4 M1624.8 140.8 H1628.6"/><path d="M1626.8 131.1 V141.3" stroke-width="1.7" stroke="#5f92dc"/>
<path d="M1627.4 133 C1628.4 131.7 1629.4 131.4 1630.3 131.4 C1632 131.4 1632.9 132.9 1632.9 135 C1632.9 137.1 1632 138.6 1630.3 138.6 C1629.4 138.6 1628.4 138.3 1627.4 137"/>
<path d="M1642.2 131.2 V133.6 C1641.8 132.2 1640.8 131.4 1639.3 131.4 C1637.6 131.4 1636.5 132.1 1636.5 133.2 C1636.5 134.5 1637.8 134.8 1639.5 135.1 C1641.4 135.5 1642.5 135.9 1642.5 137 C1642.5 138 1641.4 138.7 1639.4 138.7 C1637.6 138.7 1636.4 137.8 1636.2 136.4 V138.9"/>
</svg>
<svg id="closeT" style="left:1645px;top:964px" width="48" height="20" viewBox="1645 964 48 20" fill="none" stroke="#fff" stroke-width="1.05">
<path d="M1655.9 968.3 V971.4 C1655.6 969.5 1654.5 968.5 1652.8 968.5 C1650.4 968.5 1649.3 970.8 1649.3 973.6 C1649.3 976.4 1650.4 978.6 1652.8 978.6 C1654.6 978.6 1655.8 977.4 1656 975.6"/>
<path d="M1658.6 968.6 H1660.7 V978.6 M1658.3 978.6 H1663"/>
<ellipse cx="1669.2" cy="975.6" rx="2.9" ry="3.05"/>
<path d="M1679.4 972.4 V974.2 C1679.2 973.2 1678.4 972.6 1677 972.6 C1675.6 972.6 1674.6 973.2 1674.6 974.2 C1674.6 975.2 1675.6 975.5 1677 975.7 C1678.6 976 1679.6 976.4 1679.6 977.3 C1679.6 978.2 1678.6 978.7 1677 978.7 C1675.4 978.7 1674.5 978 1674.3 976.9 V978.8"/>
<path d="M1682.5 975.4 H1687.6 C1687.6 973.6 1686.6 972.6 1685 972.6 C1683.4 972.6 1682.4 973.8 1682.4 975.6 C1682.4 977.4 1683.4 978.7 1685.1 978.7 C1686.4 978.7 1687.3 978 1687.6 977"/>
</svg>
<div class="a" style="left:1587px;top:1022px;width:288px;height:1px;background:#dedede;"></div>
<div class="a" style="left:1587px;top:113px;width:1px;height:183px;background:#d2d6da;"></div>
<!-- help link arrow -->
<svg style="left:1718px;top:712px" width="14" height="13" viewBox="1718 712 14 13"><path d="M1719.6 714.2 L1729.9 721.7 L1725.2 724.1 L1722.6 719.4 Z" fill="#3a86ea"/></svg>
<!-- strip icons -->
<svg style="left:1875px;top:113px" width="45" height="360" viewBox="1875 113 45 360" fill="none" stroke="#7b7b7b" stroke-width="1.15" stroke-linejoin="round" stroke-linecap="round">
<!-- bulb -->
<path d="M1893.4 147.6 C1893.6 144.4 1888.2 143.4 1888.2 138.8 A9.1 9.1 0 0 1 1906.4 138.8 C1906.4 143.4 1901 144.4 1901.2 147.6z" stroke="#555"/>
<path d="M1894 148.2 L1901 147 M1894 150 L1901 148.8 M1894.4 151.8 L1900.6 150.6 M1895.4 153.4 L1899.6 152.6" stroke="#555" stroke-width="1"/>
<!-- balloon -->
<path d="M1897.2 198.6 C1891 193.6 1886.4 190.4 1886.4 186.2 C1886.4 181.6 1891.6 179.8 1897.2 179.8 C1902.8 179.8 1908 181.6 1908 186.2 C1908 190.4 1903.4 193.6 1897.2 198.6z"/>
<path d="M1897.2 198.4 C1892 192 1889.6 186 1892.8 180.4 M1897.2 198.4 C1902.4 192 1904.8 186 1901.6 180.4 M1897.2 198.4 C1894.6 191 1894.4 184 1896.2 179.9 M1897.2 198.4 C1899.8 191 1900 184 1898.2 179.9" stroke-width="0.9"/>
<rect x="1895.2" y="200.4" width="4" height="3.3"/>
<!-- brush -->
<path d="M1888 230.6 H1906 V243 C1906 244.4 1905 245 1903.6 245 H1899.4 V252 A2.2 2.2 0 0 1 1895 252 V245 H1890.4 C1889 245 1888 244.4 1888 243z"/>
<path d="M1888 241 H1906 M1892.4 236.6 V241 M1897 235 V241 M1901.6 236.6 V241" stroke-width="1"/>
<!-- layers -->
<path d="M1896.8 280.4 L1908.4 287 L1896.8 293.6 L1885.2 287z"/>
<path d="M1885.2 291.6 L1896.8 298.4 L1908.4 291.6 M1885.2 296.4 L1896.8 303.4 L1908.4 296.4"/>
<!-- ibeam -->
<path d="M1885.2 330.2 H1906.8 V334.2 H1901.4 C1899 334.2 1898.2 335.4 1898.2 337 V347.2 C1898.2 348.8 1899 350 1901.4 350 H1906.8 V353.8 H1885.2 V350 H1891.2 C1893.6 350 1894.4 348.8 1894.4 347.2 V337 C1894.4 335.4 1893.6 334.2 1891.2 334.2 H1885.2z"/>
<!-- camera -->
<path d="M1884.6 386 C1884.6 385 1885.4 384.4 1886.4 384.4 H1891 L1892.6 381.4 C1893 380.6 1893.6 380.4 1894.4 380.4 H1899.8 C1900.6 380.4 1901.2 380.6 1901.6 381.4 L1903.2 384.4 H1907 C1908 384.4 1908.8 385 1908.8 386 V397.8 C1908.8 398.8 1908 399.4 1907 399.4 H1886.4 C1885.4 399.4 1884.6 398.8 1884.6 397.8z"/>
<path d="M1886 384.2 V382.6 H1889.6 V384.2" stroke-width="1"/>
<circle cx="1896.7" cy="393.2" r="6.8"/><circle cx="1896.7" cy="393.2" r="4.5"/>
<path d="M1884.8 388.4 H1890.4 M1903 388.4 H1908.6" stroke-width="0.9"/>
<!-- cloud -->
<path d="M1890.6 450.6 C1887.2 450.6 1885.2 448.4 1885.2 445.8 C1885.2 443.2 1887.2 441.2 1889.8 441 C1890 436.6 1893 433.2 1897 433.2 C1900.4 433.2 1903 435.4 1903.8 438.6 C1906.8 438.8 1909 441.4 1909 444.6 C1909 448 1906.6 450.6 1903.2 450.6z"/>
<path d="M1897.4 447.2 V441 M1895 443.4 L1897.4 440.9 L1899.8 443.4" stroke-width="1"/>
</svg>
<span id="t0" class="t" style="left:21.00px;top:4.84px;font-size:12px;color:#000;letter-spacing:0.000px;transform:scaleX(1.0203);transform-origin:0 0;">BricsCAD Shape (NOT FOR RESALE License) - [Drawing1]</span>
<span id="t1" class="t" style="left:30.00px;top:25.84px;font-size:12px;color:#000;letter-spacing:0.000px;transform:scaleX(0.9822);transform-origin:0 0;">File</span>
<span id="t2" class="t" style="left:63.00px;top:25.84px;font-size:12px;color:#000;letter-spacing:0.000px;transform:scaleX(1.0634);transform-origin:0 0;">Edit</span>
<span id="t3" class="t" style="left:99.00px;top:25.84px;font-size:12px;color:#000;letter-spacing:0.000px;transform:scaleX(1.0466);transform-origin:0 0;">View</span>
<span id="t4" class="t" style="left:140.00px;top:25.84px;font-size:12px;color:#000;letter-spacing:0.000px;transform:scaleX(1.0994);transform-origin:0 0;">Insert</span>
<span id="t5" class="t" style="left:187.00px;top:25.84px;font-size:12px;color:#000;letter-spacing:0.139px;transform:scaleX(1.1200);transform-origin:0 0;">Tools</span>
<span id="t6" class="t" style="left:233.00px;top:25.84px;font-size:12px;color:#000;letter-spacing:0.000px;transform:scaleX(1.0708);transform-origin:0 0;">Draw</span>
<span id="t7" class="t" style="left:277.00px;top:25.84px;font-size:12px;color:#000;letter-spacing:0.310px;transform:scaleX(1.1200);transform-origin:0 0;">Model</span>
<span id="t8" class="t" style="left:329.00px;top:25.84px;font-size:12px;color:#000;letter-spacing:0.000px;transform:scaleX(1.1006);transform-origin:0 0;">Arrange</span>
<span id="t9" class="t" style="left:390.00px;top:25.84px;font-size:12px;color:#000;letter-spacing:0.253px;transform:scaleX(1.1200);transform-origin:0 0;">Modify</span>
<span id="t10" class="t" style="left:445.00px;top:25.84px;font-size:12px;color:#000;letter-spacing:0.000px;transform:scaleX(1.1010);transform-origin:0 0;">Window</span>
<span id="t11" class="t" style="left:506.00px;top:25.84px;font-size:12px;color:#000;letter-spacing:0.000px;transform:scaleX(1.0937);transform-origin:0 0;">Help</span>
<span id="t12" class="t" style="left:1614.00px;top:184.30px;font-size:15px;color:#4a8fe2;letter-spacing:0.000px;transform:scaleX(1.1141);transform-origin:0 0;-webkit-text-stroke:0.35px #4a8fe2;">Welcome!</span>
<span id="t13" class="t" style="left:1614.00px;top:213.84px;font-size:12px;color:#000;letter-spacing:0.000px;transform:scaleX(0.9947);transform-origin:0 0;">Start modeling directly with solids. Just</span>
<span id="t14" class="t" style="left:1614.00px;top:231.84px;font-size:12px;color:#000;letter-spacing:0.000px;transform:scaleX(0.9947);transform-origin:0 0;">drag, push or pull and your design</span>
<span id="t15" class="t" style="left:1614.00px;top:249.84px;font-size:12px;color:#000;letter-spacing:0.000px;transform:scaleX(1.0347);transform-origin:0 0;">concept will solidify right in front of your</span>
<span id="t16" class="t" style="left:1614.00px;top:267.84px;font-size:12px;color:#000;letter-spacing:-0.317px;transform:scaleX(0.9300);transform-origin:0 0;">eyes.</span>
<span id="t17" class="t" style="left:1614.00px;top:305.84px;font-size:12px;color:#000;letter-spacing:-0.104px;transform:scaleX(0.9300);transform-origin:0 0;-webkit-text-stroke:0.42px #000;">Essentials</span>
<span id="t18" class="t" style="left:1704.50px;top:342.84px;font-size:12px;color:#000;letter-spacing:0.000px;transform:scaleX(0.9864);transform-origin:0 0;-webkit-text-stroke:0.42px #000;">Quick draw:</span>
<span id="t19" class="t" style="left:1704.50px;top:360.84px;font-size:12px;color:#000;letter-spacing:0.000px;transform:scaleX(0.9872);transform-origin:0 0;">Design buildings and</span>
<span id="t20" class="t" style="left:1704.50px;top:378.84px;font-size:12px;color:#000;letter-spacing:0.000px;">rooms by drawing</span>
<span id="t21" class="t" style="left:1704.50px;top:396.84px;font-size:12px;color:#000;letter-spacing:0.000px;transform:scaleX(0.9572);transform-origin:0 0;">rectangles and L-shapes.</span>
<span id="t22" class="t" style="left:1704.50px;top:422.84px;font-size:12px;color:#000;letter-spacing:0.000px;transform:scaleX(0.9712);transform-origin:0 0;-webkit-text-stroke:0.42px #000;">Drag:</span>
<span id="t23" class="t" style="left:1704.50px;top:440.84px;font-size:12px;color:#000;letter-spacing:0.000px;transform:scaleX(0.9916);transform-origin:0 0;">move, change, copy</span>
<span id="t24" class="t" style="left:1704.50px;top:458.84px;font-size:12px;color:#000;letter-spacing:0.000px;transform:scaleX(0.9407);transform-origin:0 0;">solids.</span>
<span id="t25" class="t" style="left:1704.50px;top:484.84px;font-size:12px;color:#000;letter-spacing:0.000px;-webkit-text-stroke:0.42px #000;">Hold Ctrl:</span>
<span id="t26" class="t" style="left:1704.50px;top:502.84px;font-size:12px;color:#000;letter-spacing:0.000px;transform:scaleX(0.9794);transform-origin:0 0;">to toggle faces, edges</span>
<span id="t27" class="t" style="left:1704.50px;top:520.84px;font-size:12px;color:#000;letter-spacing:0.000px;transform:scaleX(0.9760);transform-origin:0 0;">and solids.</span>
<span id="t28" class="t" style="left:1704.50px;top:546.84px;font-size:12px;color:#000;letter-spacing:0.000px;transform:scaleX(0.9383);transform-origin:0 0;-webkit-text-stroke:0.42px #000;">Press Tab:</span>
<span id="t29" class="t" style="left:1704.50px;top:564.84px;font-size:12px;color:#000;letter-spacing:0.000px;transform:scaleX(0.9857);transform-origin:0 0;">to select obscured</span>
<span id="t30" class="t" style="left:1704.50px;top:582.84px;font-size:12px;color:#000;letter-spacing:0.000px;transform:scaleX(1.0197);transform-origin:0 0;">geometry.</span>
<span id="t31" class="t" style="left:1704.50px;top:608.84px;font-size:12px;color:#000;letter-spacing:0.000px;-webkit-text-stroke:0.42px #000;">Snapping:</span>
<span id="t32" class="t" style="left:1704.50px;top:626.84px;font-size:12px;color:#000;letter-spacing:0.000px;transform:scaleX(0.9760);transform-origin:0 0;">use F3 to toggle</span>
<span id="t33" class="t" style="left:1704.50px;top:644.84px;font-size:12px;color:#000;letter-spacing:0.000px;transform:scaleX(0.9895);transform-origin:0 0;">snapping.</span>
<span id="t34" class="t" style="left:1614.00px;top:692.84px;font-size:12px;color:#000;letter-spacing:0.000px;transform:scaleX(0.9776);transform-origin:0 0;-webkit-text-stroke:0.42px #000;">Need more help?</span>
<span id="t35" class="t" style="left:1614.00px;top:710.84px;font-size:12px;color:#3c8be0;letter-spacing:0.000px;transform:scaleX(1.0062);transform-origin:0 0;">Visit our help center</span>
<span id="t36" class="t" style="left:1730.00px;top:1024.00px;font-size:13px;color:#000;letter-spacing:0.000px;transform:scaleX(1.0163);transform-origin:0 0;">549'-6 5/16&quot;, 854'-4 3/16&quot;, 0&quot;</span>
</body></html>
